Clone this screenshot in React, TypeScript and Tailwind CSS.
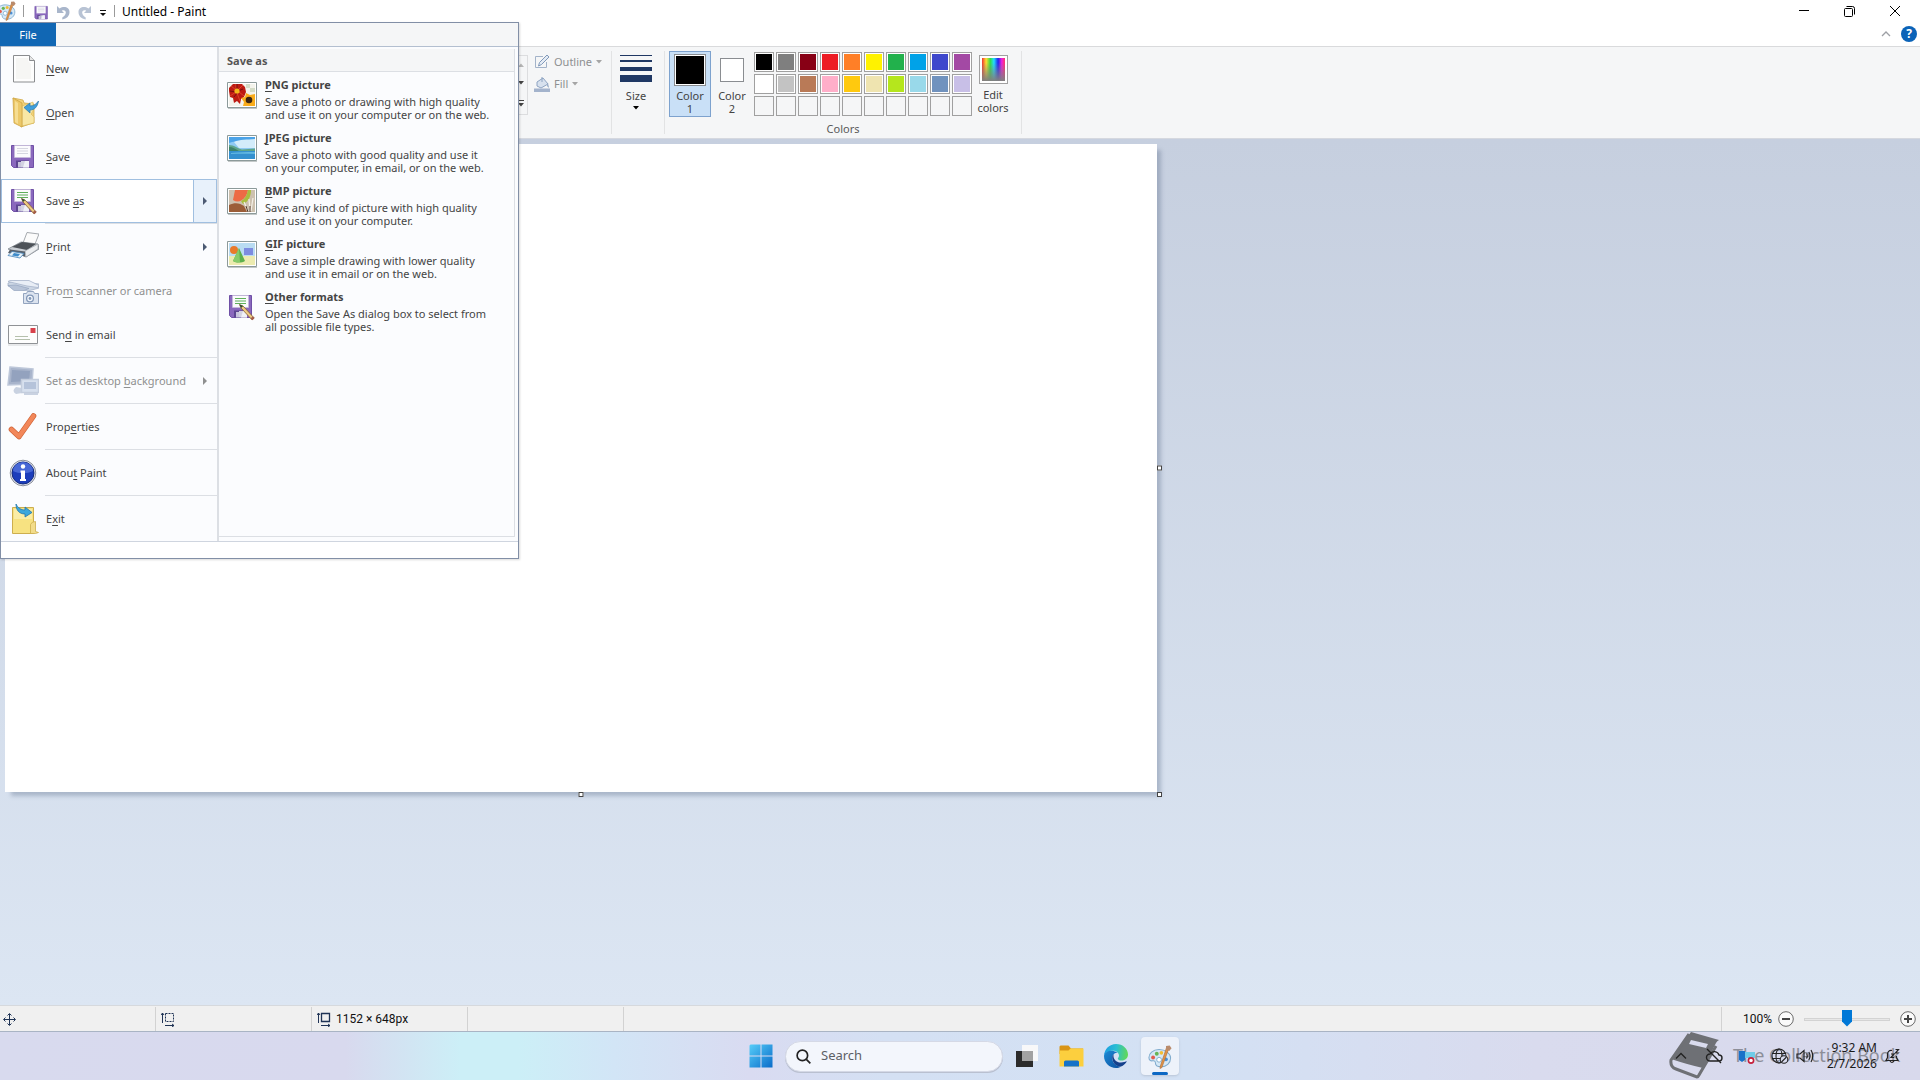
import { useState } from 'react';
import type { ReactNode } from 'react';

type MenuEntry = {
  label: string;
  icon: ReactNode;
  disabled?: boolean;
  arrow?: boolean;
  separator?: boolean;
};

type Format = { title: string; text: string[]; icon: ReactNode };

// "&" marks the access key, which is drawn underlined
function AccessLabel({ text }: { text: string }) {
  const at = text.indexOf('&');
  if (at < 0) return <>{text}</>;
  return (
    <>
      {text.slice(0, at)}
      <span className="underline underline-offset-2 [text-decoration-skip-ink:none]">{text[at + 1]}</span>
      {text.slice(at + 2)}
    </>
  );
}

function FloppyIcon({ className, pencil }: { className?: string; pencil?: boolean }) {
  return (
    <svg viewBox="0 0 28 28" className={className}>
      <path d="M1.500 2.500h22v22H3.500l-2-2z" fill="#8a68bd" stroke="#6f50a6" strokeWidth="1" />
      <path d="M4.500 2.500h16v12h-16z" fill="#fbfbfd" stroke="#c9bfdc" strokeWidth=".6" />
      <path d="M7 5.500h11M7 8h11M7 10.500h11" stroke={pencil ? '#5fb05a' : '#d5d6e0'} strokeWidth="1.100" />
      <path d="M6 17.500h13v7H6z" fill="#5d4691" />
      <path d="M11 18h8v6.500h-8z" fill="#d3d3e2" />
      <path d="M15 18h4v6.500h-6z" fill="#f1f1f8" />
      <path d="M8 19h3v5.500H8z" fill="#c9c5dd" />
      {pencil && (
        <>
          <path d="M11.500 11.500l3.600 1.600 11 11.800-2 2L13 15z" fill="#eeca84" stroke="#83602e" strokeWidth=".8" />
          <path d="M11.500 11.500l3.600 1.600L13 15z" fill="#2d4b32" />
          <path d="M24.800 23.300l1.800 1.800-2.100 2.200-1.900-1.900z" fill="#a55e4a" />
        </>
      )}
    </svg>
  );
}

function PaintIcon({ className }: { className?: string }) {
  return (
    <svg viewBox="0 0 26 26" className={className}>
      <path d="M12 5C5 5 1 9.500 1 13.500c0 3 2 4 4 3.600 2-.4 3 .4 3 2.200 0 3 2.500 4.400 6 4.400 6 0 10.500-4 10.500-9.500C24.500 9 19 5 12 5z" fill="#d5e8f6" stroke="#7fabcd" strokeWidth="1.100" />
      <circle cx="5.500" cy="13.500" r="2.100" fill="#e35b4e" />
      <circle cx="9.500" cy="9.500" r="2.100" fill="#67b556" />
      <circle cx="14.500" cy="8.500" r="2" fill="#f2bd35" />
      <circle cx="12" cy="16" r="2.600" fill="#fff" stroke="#7fabcd" />
      <circle cx="19.500" cy="15.500" r="2" fill="#4a90d8" />
      <path d="M22.500 4L15 24.500l-2 1 .3-2.500L20 3z" fill="#df9348" stroke="#a9642b" strokeWidth=".6" />
      <path d="M19.500 1l4-.5 2 3-2.500 3-3.500-1.500z" fill="#b98b6c" />
    </svg>
  );
}

const NewIcon = (
  <svg viewBox="0 0 32 32" className="size-8">
    <path d="M6.500 2.500h16l5 5v21.500h-21z" fill="#fdfdfd" stroke="#8a8c8f" />
    <path d="M9 5h12v3l3 3v15H9z" fill="#f6f6f4" />
    <path d="M22.500 2.500v5h5" fill="#e6e6e6" stroke="#8a8c8f" />
  </svg>
);

const OpenIcon = (
  <svg viewBox="0 0 32 32" className="size-8">
    <path d="M6 1l10 2 1 3 10 1v19l-4 1-9 3z" fill="#f1d27a" stroke="#d0a94a" strokeWidth=".8" />
    <path d="M15 9l11-4v9l-2 3 3 3v6l-12 3z" fill="#f8e7a5" stroke="#d9b758" strokeWidth=".6" />
    <path d="M6 1l9 5v24l-8-4z" fill="#ecc869" stroke="#cfa544" strokeWidth=".8" />
    <path d="M8 4l3 2v21l-3-2z" fill="#f6dd92" />
    <path d="M31.500 4c-1 6-4 9-8.500 9v3l-6-5.500L23 6v3c3.500 0 6.500-2 8.500-5z" fill="#3f9fdb" stroke="#2675ae" strokeWidth=".7" />
  </svg>
);

const PrintIcon = (
  <svg viewBox="0 0 32 32" className="size-8">
    <path d="M20 1.500l12 1.500-4 10-12-1z" fill="#fbfbfb" stroke="#9b9fa5" strokeWidth=".9" />
    <path d="M1 18l13-7 17 2 1 5-13 8z" fill="#c9ced4" stroke="#7f868e" strokeWidth=".8" />
    <path d="M5 16l10-5 14 2-9 6z" fill="#4d5258" />
    <path d="M18 20l13-7v5l-12 8z" fill="#eceef0" stroke="#8d949c" strokeWidth=".6" />
    <path d="M3 18.500l15 2v5L1 22z" fill="#59616b" />
    <path d="M5 20.500l12 2-4 4.500-12-2.500z" fill="#e9f3fa" stroke="#4282b8" strokeWidth=".8" />
    <path d="M7 22l6 1-2 2.500-6-1z" fill="#3e8bc9" />
  </svg>
);

const ScannerIcon = (
  <svg viewBox="0 0 32 32" className="size-8">
    <path d="M1 8l7-2 24 3v4l-11 3L1 11z" fill="#cdd7e5" stroke="#a7b4ca" strokeWidth=".8" />
    <path d="M1 6.500l2-1h19l10 5-1 2-11-1.500z" fill="#e9eef6" stroke="#a7b4ca" strokeWidth=".8" />
    <path d="M1 10.500l8-.5 13 3.500-5 2H7z" fill="#b7c3d7" stroke="#93a4bf" strokeWidth=".7" />
    <path d="M16.500 18.500h3l1-2h6l1 2h4v10h-15z" fill="#dbe3ef" stroke="#93a4bf" />
    <circle cx="23" cy="23.500" r="3.400" fill="#f5f8fc" stroke="#8398b8" strokeWidth="1.300" />
    <circle cx="23" cy="23.500" r="1.400" fill="#8398b8" />
  </svg>
);

const MailIcon = (
  <svg viewBox="0 0 32 32" className="size-8">
    <path d="M1.500 6.500h29v18h-29z" fill="#fdfdfd" stroke="#8f9296" />
    <path d="M23.500 9h5v5h-5z" fill="#d8414b" />
    <path d="M8 17.500h13M8 20.500h15" stroke="#b5c0ac" />
    <path d="M1 26h30" stroke="#d4d6d8" />
  </svg>
);

const DesktopIcon = (
  <svg viewBox="0 0 32 32" className="size-8">
    <path d="M3 2l23 2-1 15-24 1z" fill="#a8b4cb" stroke="#bdc7d9" strokeWidth="1.500" />
    <path d="M5 5l18 1-1 10-18 1z" fill="#93a2be" />
    <path d="M9 22l6 1v5l-6 1q-5-3 0-7z" fill="#c9d2e1" />
    <path d="M14.500 14.500h17v13h-17z" fill="#d7e0ee" stroke="#c4cddd" strokeWidth="1.500" />
    <path d="M17 17h12v7H17z" fill="#b5c3da" />
    <path d="M17 29h14" stroke="#c9d2e1" strokeWidth="2" />
  </svg>
);

const CheckIcon = (
  <svg viewBox="0 0 32 32" className="size-8">
    <path d="M4.500 18.500L12 25.500 26.500 5" fill="none" stroke="#cf6336" strokeWidth="5.600" strokeLinecap="round" strokeLinejoin="round" />
    <path d="M4.500 18.500L12 25.500 26.500 5" fill="none" stroke="#f2875a" strokeWidth="4.200" strokeLinecap="round" strokeLinejoin="round" />
  </svg>
);

const AboutIcon = (
  <svg viewBox="0 0 32 32" className="size-8">
    <circle cx="16" cy="16" r="12.800" fill="#dfe2ea" stroke="#8b8f9c" />
    <circle cx="16" cy="16" r="11" fill="#1c3dbb" stroke="#142b7c" />
    <path d="M6 14a10 9 0 0 1 20 0c-6 3-14 3-20 0z" fill="#4767d6" />
    <circle cx="16" cy="9.500" r="2.200" fill="#fff" />
    <path d="M13.500 13.500h4.500V22h1v2h-6v-2h1v-6.500h-.5z" fill="#fff" />
  </svg>
);

const ExitIcon = (
  <svg viewBox="0 0 32 32" className="size-8">
    <path d="M5.500 4.500h21v26h-21z" fill="#f7e281" stroke="#cdae4e" />
    <path d="M7 6h18v10H7z" fill="#faeda6" />
    <path d="M23.500 30.500v-9q1-3 5-3v10l3 1-3 1z" fill="#f2dc8a" stroke="#cdae4e" strokeWidth=".8" />
    <path d="M9 1c2 4 5 6 9 6V4l7 5.500L18 14v-3C12 11 9 7 9 1z" fill="#3ba7dc" stroke="#2576a8" strokeWidth=".8" />
  </svg>
);

function PictureFrame({ children }: { children: ReactNode }) {
  return (
    <svg viewBox="0 0 32 32" className="size-8">
      <path d="M1.500 3.500h29v25h-29z" fill="#fff" stroke="#8c9a9a" />
      <svg x="3" y="5" width="26" height="22" viewBox="0 0 26 22">
        {children}
      </svg>
      <path d="M2 29.500h29" stroke="#c3c8c8" />
    </svg>
  );
}

const PngIcon = (
  <PictureFrame>
    <path d="M0 0h26v22H0z" fill="#f3f3ec" />
    <path d="M17 0h4v4h-4zM21 4h5v4h-5z" fill="#d4dcc7" />
    <path d="M4 0h9l3 3 1 5-2 5-3 2-1 5-3-3-3 2-1-5-3-1-1-6V4z" fill="#bd1a12" />
    <path d="M2 2l5 4M14 1l-5 5M1 12l6-4M11 17L8 9M15 12L10 8M7 0v6" stroke="#dc4029" />
    <path d="M1 7l6 1M5 13l3-4M14 5l-5 2M8 0v5" stroke="#75100e" />
    <circle cx="8" cy="7" r="2.600" fill="#f3b51c" />
    <path d="M12 14l4-1 1-4 4 2 5-1v12H14l1-4z" fill="#f9ac1b" />
    <circle cx="20" cy="16" r="3.300" fill="#3a2512" />
  </PictureFrame>
);

const JpegIcon = (
  <PictureFrame>
    <path d="M0 0h26v14H0z" fill="#8ecaf3" />
    <path d="M0 0h26v3C17 4 8 3 0 6z" fill="#4ba3e8" />
    <path d="M5 5c6-3 13-2 21-3v9H10z" fill="#d3ecfa" />
    <path d="M0 8c5 0 8 3 13 4.500l13-1V15H0z" fill="#5fa58a" />
    <path d="M0 10c4 0 6 2 10 4H0z" fill="#3d8268" />
    <path d="M0 14h26v8H0z" fill="#3490cf" />
    <path d="M2 16c8-1 15-1 24-1v2c-8-.5-15-.5-24 0z" fill="#63b8e2" />
  </PictureFrame>
);

const BmpIcon = (
  <PictureFrame>
    <path d="M0 0h26v22H0z" fill="#cdc1af" />
    <path d="M6 0h13c-1 5-3 8-6 10-3 2-6 2-9 0z" fill="#ed6b45" />
    <path d="M19 0h3c0 7-3 12-8 14l-2-3c4-2 6-6 7-11z" fill="#a9bd3f" />
    <path d="M0 15c6-3 11-2 15 1l3 6H0z" fill="#9b5d38" />
    <path d="M15 12l4 9M20 9l1 12M24 8l-2 13" stroke="#f4f0e8" strokeWidth="1.200" />
    <path d="M17 16l2 6M21 16v6" stroke="#54382b" />
  </PictureFrame>
);

const GifIcon = (
  <PictureFrame>
    <path d="M0 0h26v14H0z" fill="#b9dcf2" />
    <path d="M0 13h26v9H0z" fill="#ecebb0" />
    <path d="M15 5h9v7h-9z" fill="#7d8ce0" />
    <circle cx="5" cy="7" r="4" fill="#e87a2b" />
    <path d="M10 5l6 13c-3 2-9 2-12 0z" fill="#5cb04c" />
    <path d="M10 5l1 14c-3 1-5 0-7-1z" fill="#86cb6b" />
  </PictureFrame>
);

const menuEntries: MenuEntry[] = [
  { label: '&New', icon: NewIcon },
  { label: '&Open', icon: OpenIcon },
  { label: '&Save', icon: <FloppyIcon className="size-7" /> },
  { label: 'Save &as', icon: <FloppyIcon className="size-7" pencil />, arrow: true, separator: true },
  { label: '&Print', icon: PrintIcon, arrow: true },
  { label: 'Fro&m scanner or camera', icon: ScannerIcon, disabled: true },
  { label: 'Sen&d in email', icon: MailIcon, separator: true },
  { label: 'Set as desktop &background', icon: DesktopIcon, disabled: true, arrow: true, separator: true },
  { label: 'Prop&erties', icon: CheckIcon, separator: true },
  { label: 'Abou&t Paint', icon: AboutIcon, separator: true },
  { label: 'E&xit', icon: ExitIcon },
];

const formats: Format[] = [
  {
    title: '&PNG picture',
    text: ['Save a photo or drawing with high quality', 'and use it on your computer or on the web.'],
    icon: PngIcon,
  },
  {
    title: '&JPEG picture',
    text: ['Save a photo with good quality and use it', 'on your computer, in email, or on the web.'],
    icon: JpegIcon,
  },
  {
    title: '&BMP picture',
    text: ['Save any kind of picture with high quality', 'and use it on your computer.'],
    icon: BmpIcon,
  },
  {
    title: '&GIF picture',
    text: ['Save a simple drawing with lower quality', 'and use it in email or on the web.'],
    icon: GifIcon,
  },
  {
    title: '&Other formats',
    text: ['Open the Save As dialog box to select from', 'all possible file types.'],
    icon: <FloppyIcon className="mt-0.5 ml-0.5 size-7" pencil />,
  },
];

const palette = [
  'bg-black', 'bg-[#7f7f7f]', 'bg-[#880015]', 'bg-[#ed1c24]', 'bg-[#ff7f27]',
  'bg-[#fff200]', 'bg-[#22b14c]', 'bg-[#00a2e8]', 'bg-[#3f48cc]', 'bg-[#a349a4]',
  'bg-white', 'bg-[#c3c3c3]', 'bg-[#b97a57]', 'bg-[#ffaec9]', 'bg-[#ffc90e]',
  'bg-[#efe4b0]', 'bg-[#b5e61d]', 'bg-[#99d9ea]', 'bg-[#7092be]', 'bg-[#c8bfe7]',
];

function DownArrow({ className }: { className?: string }) {
  return (
    <svg viewBox="0 0 6 4" className={`h-1 w-1.5 ${className ?? ''}`}>
      <path d="M0 0h6L3 3.500z" fill="currentColor" />
    </svg>
  );
}

function TitleBar() {
  return (
    <header className="flex h-[22px] items-center bg-white text-black">
      <PaintIcon className="-ml-1 size-5 shrink-0" />
      <span className="ml-[7px] h-3 w-px bg-[#9a9a9a]" />
      <button aria-label="Save" className="ml-2.5 pt-1">
        <FloppyIcon className="size-4" />
      </button>
      <button aria-label="Undo" className="ml-[5px] pt-1">
        <svg viewBox="0 0 16 16" className="size-4">
          <path d="M2 1v7h7L6.800 5.700C9 4.500 11.200 5.700 10.800 8c-.3 2-1.500 3-3.500 4.500V14.500C12 13.500 14.500 11 14.500 7 14.500 2.500 9 .5 4.600 3.600z" fill="#a9b6cb" />
        </svg>
      </button>
      <button aria-label="Redo" className="ml-1.5 pt-1">
        <svg viewBox="0 0 16 16" className="size-4">
          <path d="M14 1v7H7l2.200-2.300C7 4.500 4.800 5.700 5.200 8c.3 2 1.500 3 3.500 4.500V14.500C4 13.500 1.500 11 1.500 7 1.500 2.500 7 .5 11.400 3.600z" fill="#b8c3d4" />
        </svg>
      </button>
      <button aria-label="Customize Quick Access Toolbar" className="ml-1.5">
        <svg viewBox="0 0 8 8" className="mt-1 size-2">
          <path d="M1 1.500h6" stroke="#111" />
          <path d="M1 4h6L4 7z" fill="#111" />
        </svg>
      </button>
      <span className="ml-[7px] h-3 w-px bg-[#9a9a9a]" />
      <h1 className="ml-[7px] pt-0.5 text-[12px]">Untitled - Paint</h1>
      <div className="mr-0.5 ml-auto flex h-full">
        <button aria-label="Minimize" className="flex w-[45px] items-center justify-center">
          <svg viewBox="0 0 10 10" className="size-2.5">
            <path d="M0 4.500h10" stroke="#000" />
          </svg>
        </button>
        <button aria-label="Restore" className="flex w-[46px] items-center justify-center">
          <svg viewBox="0 0 11 11" className="size-[11px]" fill="none" stroke="#000">
            <rect x=".5" y="2.500" width="8" height="8" rx="1" />
            <path d="M2.500.5h6a2 2 0 0 1 2 2v6" />
          </svg>
        </button>
        <button aria-label="Close" className="flex w-[46px] items-center justify-center">
          <svg viewBox="0 0 10 10" className="size-2.5" stroke="#000">
            <path d="M0 0l10 10M10 0L0 10" />
          </svg>
        </button>
      </div>
    </header>
  );
}

function TabRow() {
  return (
    <div className="flex h-[25px] items-center justify-end gap-2.5 border-b border-[#d9dadc] bg-white pr-[3px]">
      <button aria-label="Minimize the Ribbon">
        <svg viewBox="0 0 10 6" className="h-1.5 w-2.5">
          <path d="M1 5l4-4 4 4" fill="none" stroke="#9d9fa5" strokeWidth="1.300" />
        </svg>
      </button>
      <button aria-label="Help" className="flex size-4 items-center justify-center rounded-full bg-[#0b63b8] text-[12px] font-bold text-white">
        ?
      </button>
    </div>
  );
}

function Ribbon() {
  return (
    <div className="flex h-[92px] border-b border-[#d5d8df] bg-[#f5f6f7] pl-[518px] text-[#444]">
      {/* Shapes gallery scroll strip */}
      <div className="mt-2 flex h-[60px] w-2.5 flex-col items-start justify-around border border-[#dcdddf] text-[#444]">
        <DownArrow className="-ml-px rotate-180 text-[#b5b5b5]" />
        <DownArrow className="-ml-px" />
        <svg viewBox="0 0 6 7" className="-ml-px h-[7px] w-1.5">
          <path d="M0 0h6v1H0zM0 3h6L3 6.500z" fill="currentColor" />
        </svg>
      </div>
      <div className="flex w-[83px] flex-col gap-1 pt-1.5 pl-1.5 text-[#8e8f91]">
        <button disabled className="flex h-[18px] items-center gap-1">
          <svg viewBox="0 0 16 16" className="size-4" fill="none">
            <path d="M9 2.500H1.500v11h11V8" stroke="#a3b3c9" />
            <path d="M4.500 12l1-3.500L13 1l2 2-7.500 7.500z" fill="#e4ebf4" stroke="#8199ba" />
          </svg>
          Outline
          <DownArrow className="text-[#a5a5a5]" />
        </button>
        <button disabled className="flex h-[18px] items-center gap-1">
          <svg viewBox="0 0 16 16" className="size-4">
            <path d="M3 6l6-4 5 6-7 4-4-2z" fill="#d7e1ee" stroke="#8ea4c2" />
            <path d="M8 6V1" stroke="#8ea4c2" />
            <path d="M14 7l1 5-2-2z" fill="#8ea4c2" />
            <path d="M0 12.500h16V16H0z" fill="#a3b3cc" />
          </svg>
          Fill
          <DownArrow className="text-[#a5a5a5]" />
        </button>
      </div>
      <div className="my-1 flex w-[54px] justify-center border-x border-[#e2e3e4] pr-1">
        <button className="flex flex-col items-center pt-1">
          <svg viewBox="0 0 32 28" className="h-7 w-8" fill="#1f3864">
            <path d="M0 0h32v1H0zM0 5h32v2H0zM0 12h32v4H0zM0 20h32v7H0z" />
          </svg>
          <span className="mt-1.5 leading-[13px]">Size</span>
          <DownArrow className="mt-1 text-black" />
        </button>
      </div>
      <div className="my-1 flex w-[357px] flex-col items-center border-r border-[#e2e3e4]">
        <div className="flex w-full pl-1">
          <button className="flex h-[66px] w-[42px] flex-col items-center border border-[#7da2ce] bg-[#c9e0f7] pt-0.5 leading-[13px]">
            <span className="mb-[3px] size-8 border border-[#8a8d91] bg-white p-px">
              <span className="block size-full bg-black" />
            </span>
            Color
            <br />1
          </button>
          <button className="flex h-[66px] w-[42px] flex-col items-center pt-[7px] leading-[13px]">
            <span className="mb-[7px] size-6 border border-[#8a8d91] bg-white" />
            Color
            <br />2
          </button>
          <div className="ml-px grid grid-cols-10 content-start gap-0.5 pt-px">
            {Array.from({ length: 30 }, (_, i) => (
              <button
                key={i}
                aria-label={`Color ${i + 1}`}
                className={`size-5 border border-[#a0a0a0] ${palette[i] ? 'bg-white p-px' : 'bg-[#f5f6f7]'}`}
              >
                {palette[i] && <span className={`block size-full ${palette[i]}`} />}
              </button>
            ))}
          </div>
          <button className="flex w-[42px] flex-col items-center pt-1 leading-[13px]">
            <span className="mb-1 size-[29px] border border-[#a0a0a0] bg-white p-0.5">
              <span className="block size-full bg-[linear-gradient(to_bottom,transparent_20%,#808080),linear-gradient(to_right,#e33,#fd3_18%,#3d4_36%,#2df_52%,#22e_70%,#e2d_86%,#f36)]" />
            </span>
            Edit
            <br />
            colors
          </button>
        </div>
        <span className="mt-1 leading-[16px] text-[#5a5a5a]">Colors</span>
      </div>
    </div>
  );
}

function FileMenu() {
  return (
    <div className="absolute top-[22px] left-0 w-[519px] border border-[#828fa6] bg-white text-[#444] shadow-[1px_1px_2px_rgba(0,0,0,0.15)]">
      <div className="h-6 border-b border-[#b3bfd0] bg-[#f5f6f7]">
        <button className="-ml-px h-[23px] w-14 bg-[#1167b4] pt-px text-white">File</button>
      </div>
      <div className="flex border-b border-[#cfd5df] bg-[#fbfcfe]">
        <ul className="w-[218px] border-r-2 border-[#dcdfe4]">
          {menuEntries.map((entry) => {
            const open = entry.label === 'Save &as';
            return (
              <li key={entry.label}>
                <button
                  disabled={entry.disabled}
                  className={`flex h-11 w-full items-center text-left ${entry.disabled ? 'text-[#8f9090]' : ''} ${
                    open ? 'bg-white outline outline-1 -outline-offset-1 outline-[#a0bfe0]' : ''
                  }`}
                >
                  <span className="flex w-[45px] items-center pl-1.5 [&>.size-7]:ml-[3px]">{entry.icon}</span>
                  <span className="grow">
                    <AccessLabel text={entry.label} />
                  </span>
                  {entry.arrow && (
                    <span
                      className={`flex h-full w-6 items-center justify-center ${
                        open ? 'border border-[#a0bfe0] bg-[#e8f1fb]' : ''
                      }`}
                    >
                      <svg viewBox="0 0 4 8" className="h-2 w-1">
                        <path d="M0 0l4 4-4 4z" fill={entry.disabled ? '#8f9090' : '#4c5a73'} />
                      </svg>
                    </span>
                  )}
                </button>
                {entry.separator && <div className="ml-11 h-0.5 border-t border-[#dcdfe4]" />}
              </li>
            );
          })}
        </ul>
        <section className="mt-0.5 mr-[3px] mb-1 grow border-r border-b border-[#dcdfe4]">
          <h2 className="h-[23px] border-b border-[#dcdfe4] bg-[#f5f6f7] pl-2 leading-[24px] font-bold text-[#555]">
            Save as
          </h2>
          <ul className="pt-1.5">
            {formats.map((format) => (
              <li key={format.title}>
                <button className="flex h-[53px] w-full items-start pl-[7px] text-left leading-[13px]">
                  <span className="w-[39px] pt-px">{format.icon}</span>
                  <span>
                    <strong className="mb-1 block">
                      <AccessLabel text={format.title} />
                    </strong>
                    {format.text.map((line) => (
                      <span key={line} className="block whitespace-nowrap">
                        {line}
                      </span>
                    ))}
                  </span>
                </button>
              </li>
            ))}
          </ul>
        </section>
      </div>
      <div className="h-4" />
    </div>
  );
}

function Workspace() {
  return (
    <main className="grow bg-linear-to-b from-[#c6cfdf] to-[#dce6f3] pt-[5px] pl-[5px]">
      <div className="relative h-[648px] w-[1152px] bg-white shadow-[5px_5px_4px_-1px_rgba(90,105,135,0.35)]">
        <span className="absolute top-1/2 -right-[5px] size-[5px] -translate-y-1/2 border border-[#444] bg-white" />
        <span className="absolute -right-[5px] -bottom-[5px] size-[5px] border border-[#444] bg-white" />
        <span className="absolute -bottom-[5px] left-1/2 size-[5px] -translate-x-1/2 border border-[#444] bg-white" />
      </div>
    </main>
  );
}

function StatusBar() {
  const [zoom, setZoom] = useState(50);
  return (
    <footer className="flex h-[27px] items-end border-t border-b border-t-[#d6d9dd] border-b-[#a9b4c4] bg-[#f0f0f0] text-[12px] text-[#111]">
      <div className="flex h-6 w-[156px] items-center border-r border-[#d2d2d2] pl-[3px]">
        <svg viewBox="0 0 13 13" className="size-[13px]" stroke="#1f3355" fill="none">
          <path d="M6.500 1v11M1 6.500h11M4.500 2.500l2-2 2 2M4.500 10.500l2 2 2-2M2.500 4.500l-2 2 2 2M10.500 4.500l2 2-2 2" />
        </svg>
      </div>
      <div className="flex h-6 w-[156px] items-center border-r border-[#d2d2d2] pl-[5px]">
        <svg viewBox="0 0 14 15" className="h-[15px] w-3.5" stroke="#1f3355" fill="none">
          <path d="M4.500 1.500h8v8h-8z" strokeDasharray="2 1" />
          <path d="M1.500 11V1M0 3l1.500-2L3 3M4 13.500h9M11 12l2 1.500-2 1.500" />
        </svg>
      </div>
      <div className="flex h-6 w-[156px] items-center gap-[5px] border-r border-[#d2d2d2] pl-[5px]">
        <svg viewBox="0 0 14 15" className="h-[15px] w-3.5" stroke="#1f3355" fill="none">
          <path d="M4.500 1.500h8v8h-8z" strokeWidth="1.300" />
          <path d="M1.500 11V1M0 3l1.500-2L3 3M4 13.500h9M11 12l2 1.500-2 1.500" />
        </svg>
        <span className="font-[Roboto,sans-serif]">1152 × 648px</span>
      </div>
      <div className="h-6 w-[156px] border-r border-[#d2d2d2]" />
      <div className="ml-auto flex h-6 items-center border-l border-[#d2d2d2] pr-1 pl-[21px]">
        <label htmlFor="zoom" className="w-[29px] font-[Roboto,sans-serif]">100%</label>
        <button aria-label="Zoom out" className="ml-1.5">
          <svg viewBox="0 0 16 16" className="size-4" fill="#fafafa" stroke="#6a6a6a">
            <circle cx="8" cy="8" r="7.300" />
            <path d="M4 8h8" stroke="#444" strokeWidth="2" />
          </svg>
        </button>
        <input
          id="zoom"
          type="range"
          value={zoom}
          onChange={(e) => setZoom(Number(e.target.value))}
          className="mx-2.5 h-4 w-[86px] appearance-none bg-transparent [&::-webkit-slider-runnable-track]:h-[3px] [&::-webkit-slider-runnable-track]:border [&::-webkit-slider-runnable-track]:border-[#d3d3d3] [&::-webkit-slider-runnable-track]:bg-[#e7e7e7] [&::-webkit-slider-thumb]:-mt-[9px] [&::-webkit-slider-thumb]:h-[17px] [&::-webkit-slider-thumb]:w-2.5 [&::-webkit-slider-thumb]:appearance-none [&::-webkit-slider-thumb]:bg-[#0078d7] [&::-webkit-slider-thumb]:[clip-path:polygon(0_0,100%_0,100%_70%,50%_100%,0_70%)]"
        />
        <button aria-label="Zoom in">
          <svg viewBox="0 0 16 16" className="size-4" fill="#fafafa" stroke="#6a6a6a">
            <circle cx="8" cy="8" r="7.300" />
            <path d="M4 8h8M8 4v8" stroke="#444" strokeWidth="2" />
          </svg>
        </button>
      </div>
    </footer>
  );
}

function EdgeIcon() {
  return (
    <svg viewBox="0 0 24 24" className="size-6">
      <defs>
        <linearGradient id="edge-top" x1="0" x2="1" y1=".4" y2=".5">
          <stop offset="0" stopColor="#1b9de2" />
          <stop offset=".5" stopColor="#2bbfd2" />
          <stop offset="1" stopColor="#62d955" />
        </linearGradient>
        <linearGradient id="edge-left" x1="0" x2="1" y1="0" y2="1">
          <stop offset="0" stopColor="#1b8bd6" />
          <stop offset="1" stopColor="#0d4f9e" />
        </linearGradient>
      </defs>
      <path d="M0 11.500C.5 5 5.500 0 12 0c7 0 12 5 12 10.500 0 3.500-2.800 6-6.200 6-2.500 0-4-1-4-1.800 0-.7 1.200-1.200 1.200-3.200 0-2.600-2.600-4.800-6-4.800-4.500 0-8 2-9 4.800z" fill="url(#edge-top)" />
      <path d="M0 12c0-3.500 4-5.500 8-5.300 2 .1 4 .9 5.200 2.300-2-.6-5 1.300-5 5C8.200 19 13 23 17 22.400 15.500 23.500 13.800 24 12 24 5.400 24 0 18.600 0 12z" fill="url(#edge-left)" />
      <path d="M8.200 13.500c0-1.500.6-2.800 1.500-3.600C8.500 14 11.500 18.500 17 18.500c2.500 0 4.200-.6 5.200-1.200.4-.2.6.1.4.5C21.300 20 19.500 21.700 17 22.400 12.500 23 8.200 19 8.200 13.500z" fill="#15418c" />
    </svg>
  );
}

function Taskbar() {
  return (
    <nav className="relative flex h-12 items-center bg-[linear-gradient(to_right,#d8daee,#d8d9ee_18%,#cceff7_24%,#cceff7_27%,#d2e5f6_32%,#d9dbf1_39%,#d4e0f3_46%,#d3e1f4_62%,#d9dbee_80%,#d8d9ec)] text-[#1b1b1b]">
      {/* Watermark lies under the tray icons */}
      <div className="pointer-events-none absolute right-[21px] bottom-0 flex h-12 items-center gap-3.5 text-[#6e7075]">
        <svg viewBox="0 0 50 48" className="h-12 w-[50px]">
          <path d="M22 0l28 8q-2 1-3 3L34 36Q20 33 2 27z" fill="currentColor" />
          <path d="M22 8l17 4-2 4-17-4z" fill="#d9dbee" />
          <path d="M20 2L2 28q-1 7 5 9l21 8q1 0 2-2L47 14" fill="none" stroke="currentColor" strokeWidth="3" />
        </svg>
        <span className="w-[166px] pb-0.5 text-[18px] whitespace-nowrap text-[#8c8e98]">The Collection Book</span>
      </div>
      <div className="absolute inset-y-0 left-1/2 -ml-[219px] flex items-center whitespace-nowrap">
        <button aria-label="Start" className="ml-2">
          <svg viewBox="0 0 24 24" className="size-6">
            <defs>
              <linearGradient id="start" x1="0" y1="0" x2="1" y2="1">
                <stop offset="0" stopColor="#56cdf9" />
                <stop offset="1" stopColor="#0a6cc9" />
              </linearGradient>
            </defs>
            <path d="M1.500.5H11.500V11.500H.500V1.500zM12.500.5h11v11h-11zM.5 12.500h11v11H.5zM12.500 12.500h11v11h-11z" fill="url(#start)" />
          </svg>
        </button>
        <div className="ml-3 flex h-[31px] w-[218px] items-center rounded-full border border-[#d5d9e6] bg-[#f3f6fc] pl-2.5 shadow-[0_1px_0_#b9c0d0]">
          <svg viewBox="0 0 16 16" className="size-[15px] shrink-0" fill="none" stroke="#222" strokeWidth="1.800">
            <circle cx="6.800" cy="6.800" r="5.600" />
            <path d="M11 11l4.300 4.300" />
          </svg>
          <input
            type="text"
            aria-label="Search"
            placeholder="Search"
            className="ml-2.5 w-40 bg-transparent text-[13px] placeholder:text-[#5c5f66]"
          />
        </div>
        <button aria-label="Task view" className="ml-3">
          <svg viewBox="0 0 24 24" className="size-6">
            <path d="M7 1h16v16H7z" fill="#f8f8f9" />
            <path d="M1 7h17v16H1z" fill="#2b2b2b" />
            <path d="M7 7h11v10H7z" fill="#a2a2a2" />
          </svg>
        </button>
        <button aria-label="File Explorer" className="ml-5">
          <svg viewBox="0 0 25 24" className="h-6 w-[25px]">
            <path d="M1.500 1.500h8l2.500 3h12V10H.500V2.500z" fill="#d99415" />
            <path d="M.5 6.500h9l2-2h13v18H.5z" fill="#fccf3e" />
            <path d="M5 22.500V18q0-1.500 1.500-1.500h12Q20 16.500 20 18v4.500z" fill="#1572c8" />
          </svg>
        </button>
        <button aria-label="Microsoft Edge" className="ml-5">
          <EdgeIcon />
        </button>
        <button
          aria-label="Paint"
          className="ml-[13px] flex h-[38px] w-[38px] flex-col items-center justify-end rounded bg-[#edf2fa] shadow-sm"
        >
          <PaintIcon className="size-6" />
          <span className="mt-[3px] h-[3px] w-4 rounded-full bg-[#0c68c4]" />
        </button>
      </div>
      <div className="relative ml-auto flex h-full items-center">
        <button aria-label="Show hidden icons">
          <svg viewBox="0 0 12 8" className="h-2 w-3" fill="none" stroke="#222" strokeWidth="1.300">
            <path d="M1 6.500l5-5 5 5" />
          </svg>
        </button>
        <button aria-label="OneDrive" className="ml-[18px]">
          <svg viewBox="0 0 18 16" className="h-4 w-[18px]" fill="none" stroke="#222" strokeWidth="1.400">
            <path d="M5 13h9a3 3 0 0 0 0-6 5 5 0 0 0-9-1 3.500 3.500 0 0 0 0 7zM2 1l14 14" />
          </svg>
        </button>
        <button aria-label="Input tray" className="ml-4">
          <svg viewBox="0 0 16 16" className="size-4">
            <path d="M0 3h6v9l-3 2-3-2z" fill="#1972c9" />
            <path d="M6 4h10v6H6z" fill="#6fcbe8" />
            <circle cx="12" cy="12.500" r="2.600" fill="#fff" stroke="#c5203c" strokeWidth="1.600" />
          </svg>
        </button>
        <button aria-label="Network" className="ml-4">
          <svg viewBox="0 0 18 16" className="h-4 w-[18px]" fill="none" stroke="#222" strokeWidth="1.100">
            <circle cx="8" cy="8" r="7" />
            <ellipse cx="8" cy="8" rx="3" ry="7" />
            <path d="M1 5.500h14M1 10.500h14" />
            <circle cx="13" cy="11.500" r="3.800" fill="#d9dbee" />
            <path d="M10.500 14l5-5" />
          </svg>
        </button>
        <button aria-label="Volume" className="ml-[7px]">
          <svg viewBox="0 0 18 14" className="h-3.5 w-[18px]" fill="none" stroke="#222" strokeWidth="1.200">
            <path d="M1 5v4h3l4 3.500v-11L4 5zM10.500 4.500q1.500 2.500 0 5M12.800 3q2.500 4 0 8M15 1q3.500 6 0 12" />
          </svg>
        </button>
        <button className="ml-3 w-[51px] text-right text-[12px] leading-4 whitespace-nowrap">
          9:32 AM
          <br />
          2/7/2026
        </button>
        <button aria-label="Notifications" className="mr-5 ml-[7px]">
          <svg viewBox="0 0 16 16" className="size-4" fill="none" stroke="#222" strokeWidth="1.200">
            <path d="M8 2.500C5 2 3.500 4 3.500 6.500v3L2 12.500h12l-1.500-3V8M6 13q2 3 4 0M7 6h3l-3 3.500h3M11.500 1.500h3l-3 3.500h3" />
          </svg>
        </button>
      </div>
    </nav>
  );
}

export default function App() {
  return (
    <div className="relative flex min-h-screen flex-col overflow-hidden font-['Noto_Sans','Open_Sans',sans-serif] text-[11px]">
      <TitleBar />
      <TabRow />
      <Ribbon />
      <Workspace />
      <StatusBar />
      <Taskbar />
      <FileMenu />
    </div>
  );
}
